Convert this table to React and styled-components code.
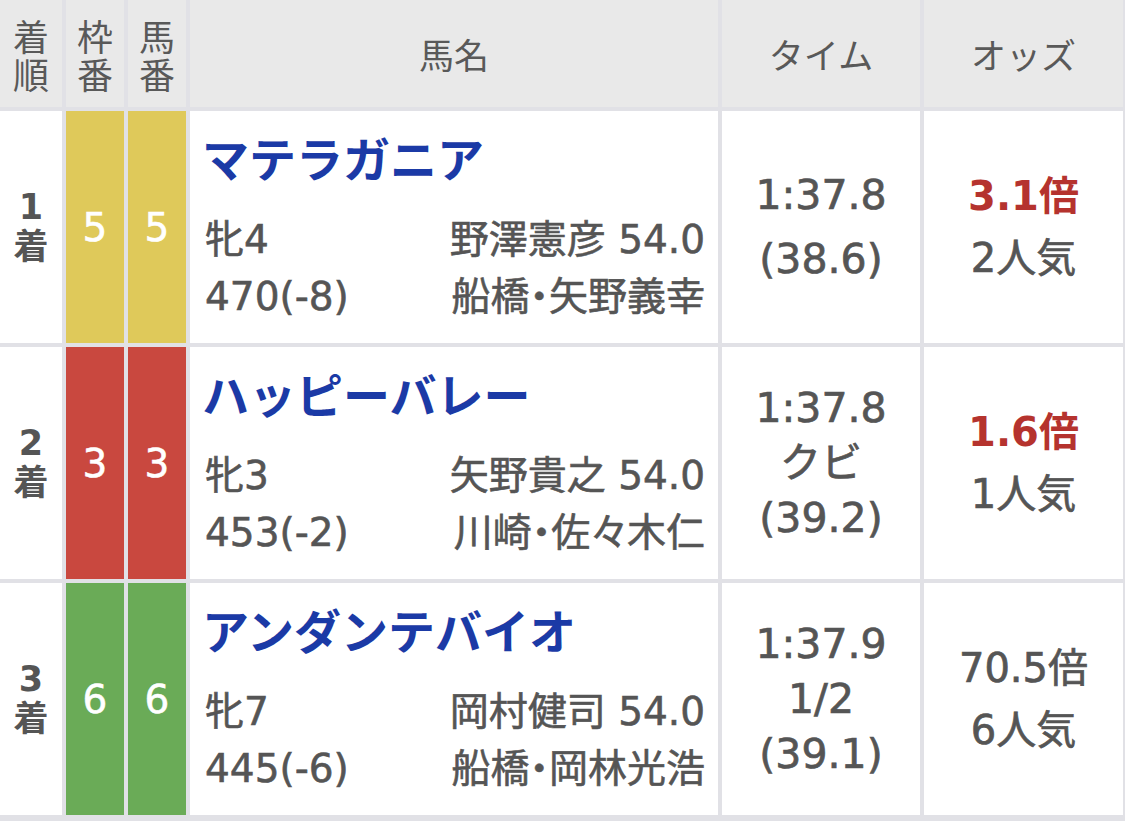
import React from "react";
import styled, { createGlobalStyle } from "styled-components";

const GlobalStyle = createGlobalStyle`
  body {
    margin: 0;
    background: #ffffff;
    font-family: "DejaVu Sans", "Noto Sans CJK JP", sans-serif;
    color: #555555;
  }
`;

const Table = styled.div`
  display: grid;
  grid-template-columns: 62px 58px 58px 528px 198px 1fr;
  grid-template-rows: 107px repeat(3, 232px);
  gap: 4px;
  width: 1125px;
  padding: 0 2px 6px 0;
  box-sizing: border-box;
  background: #e1e1e6;
`;

const HeadCell = styled.div`
  display: flex;
  align-items: center;
  justify-content: center;
  background: #e9e9e9;
  font-family: "Noto Sans CJK JP", sans-serif;
  font-size: ${({ $stack }) => ($stack ? "36px" : "35px")};
  line-height: 38px;
  color: #595959;
  text-align: center;
  white-space: pre-line;
`;

const RankCell = styled.div`
  display: flex;
  align-items: center;
  justify-content: center;
  background: #ffffff;
  font-family: "DejaVu Sans", "Noto Sans CJK JP", sans-serif;
  font-weight: 700;
  font-size: 35px;
  line-height: 40px;
  color: #555555;
  text-align: center;
  white-space: pre-line;
`;

const BracketCell = styled.div`
  display: flex;
  align-items: center;
  justify-content: center;
  background: ${({ $color }) => $color};
  color: #ffffff;
  font-size: 39px;
  -webkit-text-stroke: 0.6px #ffffff;
`;

const NameCell = styled.div`
  background: #ffffff;
  padding: 14px 13px 0 12px;
  display: flex;
  flex-direction: column;
`;

const HorseName = styled.div`
  font-family: "Noto Sans CJK JP", sans-serif;
  font-weight: 700;
  font-size: 47px;
  line-height: 64px;
  color: #1b3aa6;
  margin-bottom: 22px;
`;

const InfoRow = styled.div`
  display: flex;
  justify-content: space-between;
  padding-left: 3px;
  font-size: 39px;
  line-height: 57px;
  color: #555555;
  font-feature-settings: "palt";
  -webkit-text-stroke: 0.6px #555555;
`;

const TimeCell = styled.div`
  background: #ffffff;
  display: flex;
  flex-direction: column;
  align-items: center;
  justify-content: center;
  gap: ${({ $compact }) => ($compact ? "9px" : "0")};
  font-size: 41px;
  line-height: 55px;
  color: #555555;
  -webkit-text-stroke: 0.7px #555555;
`;

const OddsCell = styled.div`
  background: #ffffff;
  display: flex;
  flex-direction: column;
  align-items: center;
  justify-content: center;
  font-size: 40px;
  line-height: 62px;
  color: #555555;
  -webkit-text-stroke: 0.7px #555555;
`;

const Odds = styled.div`
  color: ${({ $hot }) => ($hot ? "#b5332e" : "#555555")};
  font-weight: ${({ $hot }) => ($hot ? 700 : 400)};
  -webkit-text-stroke: ${({ $hot }) => ($hot ? "0" : "0.7px #555555")};
`;

const BRACKET_COLORS = {
  3: "#c9483f",
  5: "#dfc95a",
  6: "#6aab57",
};

const results = [
  {
    rank: 1,
    bracket: 5,
    number: 5,
    name: "マテラガニア",
    sexAge: "牝4",
    jockey: "野澤憲彦 54.0",
    weight: "470(-8)",
    trainer: "船橋・矢野義幸",
    time: "1:37.8",
    margin: "",
    last: "(38.6)",
    odds: "3.1倍",
    pop: "2人気",
  },
  {
    rank: 2,
    bracket: 3,
    number: 3,
    name: "ハッピーバレー",
    sexAge: "牝3",
    jockey: "矢野貴之 54.0",
    weight: "453(-2)",
    trainer: "川崎・佐々木仁",
    time: "1:37.8",
    margin: "クビ",
    last: "(39.2)",
    odds: "1.6倍",
    pop: "1人気",
  },
  {
    rank: 3,
    bracket: 6,
    number: 6,
    name: "アンダンテバイオ",
    sexAge: "牝7",
    jockey: "岡村健司 54.0",
    weight: "445(-6)",
    trainer: "船橋・岡林光浩",
    time: "1:37.9",
    margin: "1/2",
    last: "(39.1)",
    odds: "70.5倍",
    pop: "6人気",
  },
];

const App = () => {
  return (
    <>
      <GlobalStyle />
      <Table>
        <HeadCell $stack>{"着\n順"}</HeadCell>
        <HeadCell $stack>{"枠\n番"}</HeadCell>
        <HeadCell $stack>{"馬\n番"}</HeadCell>
        <HeadCell>馬名</HeadCell>
        <HeadCell>タイム</HeadCell>
        <HeadCell>オッズ</HeadCell>

        {results.map((r) => (
          <React.Fragment key={r.rank}>
            <RankCell>{`${r.rank}\n着`}</RankCell>
            <BracketCell $color={BRACKET_COLORS[r.bracket]}>{r.bracket}</BracketCell>
            <BracketCell $color={BRACKET_COLORS[r.bracket]}>{r.number}</BracketCell>
            <NameCell>
              <HorseName>{r.name}</HorseName>
              <InfoRow>
                <span>{r.sexAge}</span>
                <span>{r.jockey}</span>
              </InfoRow>
              <InfoRow>
                <span>{r.weight}</span>
                <span>{r.trainer}</span>
              </InfoRow>
            </NameCell>
            <TimeCell $compact={!r.margin}>
              <div>{r.time}</div>
              {r.margin && <div>{r.margin}</div>}
              <div>{r.last}</div>
            </TimeCell>
            <OddsCell>
              <Odds $hot={r.pop === "1人気" || r.pop === "2人気"}>{r.odds}</Odds>
              <div>{r.pop}</div>
            </OddsCell>
          </React.Fragment>
        ))}
      </Table>
    </>
  );
};

export default App;
